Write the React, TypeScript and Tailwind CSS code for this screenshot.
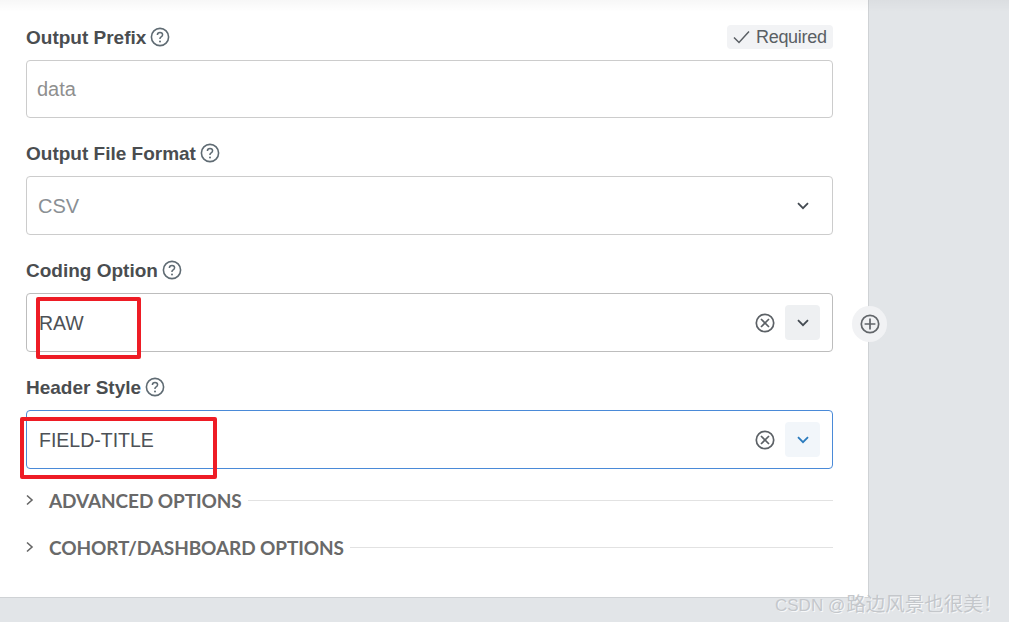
import React from 'react';

const HelpIcon = () => (
  <svg width="20" height="20" viewBox="0 0 20 20" fill="none" className="shrink-0">
    <circle cx="10" cy="10" r="8.6" stroke="#5f6b73" strokeWidth="1.6" />
    <path d="M7.4 7.9c0-1.5 1.1-2.5 2.6-2.5s2.6 1 2.6 2.3c0 1-.6 1.6-1.4 2.1-.8.5-1.2.9-1.2 1.8v.3" stroke="#5f6b73" strokeWidth="1.5" />
    <circle cx="10" cy="14.4" r="1" fill="#5f6b73" />
  </svg>
);

const Chevron = ({ color = '#444b52' }: { color?: string }) => (
  <svg width="12" height="8" viewBox="0 0 12 8" fill="none">
    <path d="M1 1.2l5 5 5-5" stroke={color} strokeWidth="1.8" />
  </svg>
);

const ClearIcon = () => (
  <svg width="20" height="20" viewBox="0 0 20 20" fill="none">
    <circle cx="10" cy="10" r="8.7" stroke="#5c6166" strokeWidth="1.7" />
    <path d="M6 6l8 8M14 6l-8 8" stroke="#5c6166" strokeWidth="1.7" />
  </svg>
);

const FieldLabel = ({ text }: { text: string }) => (
  <div className="flex items-center gap-[4px]">
    <span className="font-bold text-[19px] pt-[2px] text-[#4a4d50]">{text}</span>
    <HelpIcon />
  </div>
);

const Accordion = ({ text }: { text: string }) => (
  <div className="flex items-center h-[24px] ml-[-1px]">
    <svg width="10" height="12" viewBox="0 0 10 12" fill="none" className="mr-[14px]">
      <path d="M2 1.5l5 4.5-5 4.5" stroke="#666" strokeWidth="1.6" />
    </svg>
    <span className="font-bold text-[19px] pt-[2px] tracking-[-0.1px] text-[#696969] whitespace-nowrap font-['Lato',sans-serif]">
      {text}
    </span>
    <div className="flex-1 h-px bg-[#e2e2e2] ml-[6px]" />
  </div>
);

const App: React.FC = () => {
  return (
    <div className="relative w-[1009px] h-[622px] overflow-hidden bg-[#e2e5e8] font-['Liberation_Sans',Arial,sans-serif]">
      <div className="absolute top-0 left-0 w-full h-[12px] bg-gradient-to-b from-[#00000008] to-transparent" />

      <div className="w-[869px] h-[598px] bg-white border-r border-b border-[#cfd2d5] pt-[25px] pl-[26px] pr-[35px]">
        <div className="flex items-center justify-between h-[24px] mb-[11px]">
          <FieldLabel text="Output Prefix" />
          <div className="flex items-center h-[24px] w-[106px] pl-[6px] rounded-[4px] bg-[#f2f3f5] text-[#5a5f64] text-[18px] tracking-[-0.3px]">
            <svg width="17" height="14" viewBox="0 0 17 14" fill="none" className="mr-[6px]">
              <path d="M1 7.5l5 5L16 1.5" stroke="#5a5f64" strokeWidth="1.5" />
            </svg>
            Required
          </div>
        </div>
        <div className="flex items-center h-[58px] mb-[23px] pl-[10px] border border-[#cccccc] rounded-[4px] text-[20px] text-[#8f8f8f]">
          data
        </div>

        <div className="h-[24px] mb-[11px] flex items-center">
          <FieldLabel text="Output File Format" />
        </div>
        <div className="flex items-center justify-between h-[59px] mb-[23px] pl-[11px] pr-[23px] border border-[#cccccc] rounded-[4px] text-[20px] text-[#8a8f94]">
          <span className="pt-[1px]">CSV</span>
          <Chevron />
        </div>

        <div className="h-[24px] mb-[11px] flex items-center">
          <FieldLabel text="Coding Option" />
        </div>
        <div className="flex items-center h-[59px] mb-[23px] pl-[12px] pr-[12px] border border-[#bdbdbd] rounded-[4px] text-[19.5px] text-[#4d5156]">
          <span className="flex-1 pt-[2px]">RAW</span>
          <ClearIcon />
          <div className="flex items-center justify-center w-[35px] h-[35px] ml-[10px] rounded-[4px] bg-[#eef0f2]">
            <Chevron />
          </div>
        </div>

        <div className="h-[24px] mb-[11px] flex items-center">
          <FieldLabel text="Header Style" />
        </div>
        <div className="flex items-center h-[59px] mb-[19px] pl-[12px] pr-[12px] border border-[#4a8ad8] rounded-[4px] text-[19.5px] text-[#4d5156]">
          <span className="flex-1 pt-[2px]">FIELD-TITLE</span>
          <ClearIcon />
          <div className="flex items-center justify-center w-[35px] h-[35px] ml-[10px] rounded-[4px] bg-[#f2f6fa]">
            <Chevron color="#2b7bbd" />
          </div>
        </div>

        <div className="flex flex-col gap-[23px]">
          <Accordion text="ADVANCED OPTIONS" />
          <Accordion text="COHORT/DASHBOARD OPTIONS" />
        </div>
      </div>

      {/* add button sits over the panel edge */}
      <div className="absolute left-[852px] top-[306px] flex items-center justify-center w-[35px] h-[36px] rounded-full bg-[#f1f2f4]">
        <svg width="20" height="20" viewBox="0 0 20 20" fill="none">
          <circle cx="10" cy="10" r="8.7" stroke="#62666a" strokeWidth="1.7" />
          <path d="M10 4.6v10.8M4.6 10h10.8" stroke="#62666a" strokeWidth="1.7" />
        </svg>
      </div>

      {/* red annotation boxes */}
      <div className="absolute left-[36px] top-[297px] w-[105px] h-[62px] border-[4px] border-[#ee1c25] rounded-[2px]" />
      <div className="absolute left-[20px] top-[417px] w-[197px] h-[62px] border-[4px] border-[#ee1c25] rounded-[2px]" />

      {/* watermark */}
      <div className="absolute left-[775px] top-[590px] text-[19.5px] leading-[28px] text-[#c4c7cb] [text-shadow:1px_1px_0_#f7f8f9] font-['Liberation_Sans','Noto_Sans_CJK_SC',sans-serif] whitespace-nowrap">
        <span className="text-[17px] mr-[1px]">CSDN @</span>路边风景也很美！
      </div>
    </div>
  );
};

export default App;
